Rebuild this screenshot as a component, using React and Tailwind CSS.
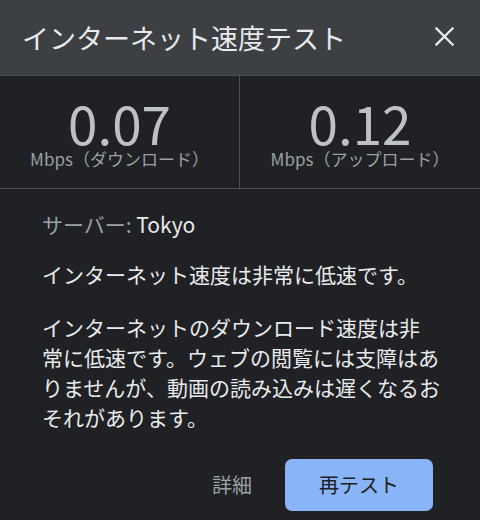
export default function App() {
  return (
    <div className="flex h-[520px] w-[480px] flex-col overflow-hidden bg-[#202124] font-['Noto_Sans_CJK_JP','Noto_Sans',sans-serif] text-[#e8eaed]">
      <div className="flex h-[76px] items-center justify-between border-b border-[#4a4d51] bg-[#3c4043] pl-[22px] pr-[26px]">
        <h1 className="text-[27px] leading-none tracking-[0px]">インターネット速度テスト</h1>
        <svg width="19" height="19" viewBox="0 0 19 19" className="mb-[2px] text-[#e8eaed]">
          <path d="M1.5 1.5L17.5 17.5M17.5 1.5L1.5 17.5" stroke="currentColor" strokeWidth="2.3" strokeLinecap="square" />
        </svg>
      </div>

      <div className="grid h-[113px] grid-cols-2 border-b border-[#4a4d51]">
        <Metric value="0.07" label="Mbps（ダウンロード）" className="border-r border-[#4a4d51]" />
        <Metric value="0.12" label="Mbps（アップロード）" />
      </div>

      <div className="flex flex-1 flex-col pl-[42px] pr-[20px] pt-[20px] text-[21px]">
        <p className="leading-[30px]">
          <span className="text-[#9aa0a6]">サーバー: </span>Tokyo
        </p>
        <p className="mt-[20px] leading-[30px]">インターネット速度は非常に低速です。</p>
        <p className="mt-[23px] whitespace-nowrap leading-[30px]">
          インターネットのダウンロード速度は非
          <br />
          常に低速です。ウェブの閲覧には支障はあ
          <br />
          りませんが、動画の読み込みは遅くなるお
          <br />
          それがあります。
        </p>

        <div className="mt-[27px] flex items-center justify-end gap-[33px] pr-[27px]">
          <button className="text-[20px] text-[#9aa0a6]">詳細</button>
          <button className="h-[52px] w-[148px] rounded-[7px] bg-[#8ab4f8] text-[20px] text-[#202124]">再テスト</button>
        </div>
      </div>
    </div>
  );
}

function Metric({ value, label, className = "" }) {
  return (
    <div className={`flex flex-col items-center pt-[24px] ${className}`}>
      <div className="text-[53px] leading-[44px] text-[#bdc1c6]">{value}</div>
      <div className="mt-[5px] text-[17px] leading-[20px] text-[#9aa0a6]">{label}</div>
    </div>
  );
}
